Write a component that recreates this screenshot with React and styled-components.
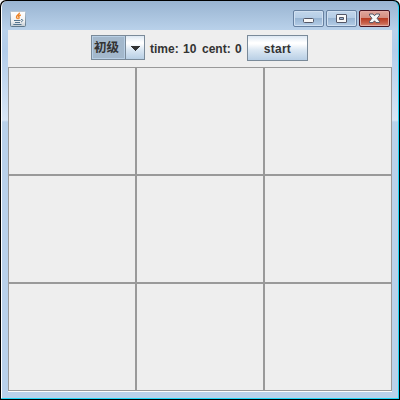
import React from 'react';
import styled, { createGlobalStyle } from 'styled-components';

const Global = createGlobalStyle`
  * { box-sizing: border-box; }
  html, body { margin: 0; background: #f4f4f4; overflow: hidden; }
`;

const Desktop = styled.div`
  width: 400px;
  height: 400px;
  padding: 1px;
  background: #000;
  border-radius: 6px 6px 0 0;
  font-family: "Liberation Sans", "Noto Sans CJK SC", sans-serif;
`;

const Frame = styled.div`
  display: flex;
  flex-direction: column;
  width: 398px;
  height: 398px;
  padding: 0 6px 6px;
  border: solid;
  border-width: 0 1px 1px 1px;
  border-color: #fff #20d5f5 #20d5f5 #fff;
  border-radius: 6px 6px 1px 1px;
  background: linear-gradient(#99b4d1 0, #b9d1ea 29px, #b3cdea 50px, #d8e6f5 119px, #b9d1ea 121px, #b9d1ea 100%);
`;

const TitleBar = styled.div`
  display: flex;
  justify-content: space-between;
  height: 29px;
  flex: none;
  padding: 9px 2px 0;
`;

const Controls = styled.div`
  display: flex;
  gap: 2px;
`;

const faces = {
  normal: 'linear-gradient(#c2d6eb 0, #b5cde6 45%, #98b5d3 50%, #b4cde7 100%)',
  close: 'linear-gradient(#e0a79d 0, #d58d80 45%, #b93c23 50%, #c8604b 80%, #d58b74 100%)',
};

const WindowButton = styled.button`
  display: flex;
  align-items: center;
  justify-content: center;
  width: 31px;
  height: 17px;
  padding: 0;
  border: 1px solid ${(p) => (p.$kind === 'close' ? '#481522' : '#6680a0')};
  border-radius: 2px;
  box-shadow: inset 0 0 0 1px ${(p) => (p.$kind === 'close' ? '#e4aaa3' : '#d0e0f1')};
  background: ${(p) => faces[p.$kind]};
`;

const JavaIcon = styled.svg`
  display: block;
  width: 16px;
  height: 16px;
  margin-top: 1px;
`;

const Content = styled.div`
  display: flex;
  flex-direction: column;
  flex: none;
  height: 362px;
  background: #eee;
  border-bottom: 1px solid #fafafa;
`;

const Toolbar = styled.div`
  display: flex;
  align-items: flex-start;
  height: 37px;
  flex: none;
  padding: 5px 0 0 83px;
`;

const metal = 'linear-gradient(#dde8f3 0, #fff 27%, #fff 33%, #dce8f3 58%, #b8cfe5 100%)';

const Combo = styled.div`
  display: flex;
  width: 54px;
  height: 25px;
  border: 1px solid #7a8a99;
  background: #a3b8cc;
`;

const Selected = styled.div`
  width: 33px;
  border: 1px solid #b8cfe5;
  padding-left: 1px;
  font: bold 12.5px/20px "Noto Sans CJK SC", sans-serif;
  color: #333;
  white-space: nowrap;
`;

const Arrow = styled.div`
  display: flex;
  align-items: center;
  justify-content: center;
  width: 19px;
  padding-top: 1px;
  border-left: 1px solid #7a8a99;
  background: ${metal};
`;

const Label = styled.span`
  width: ${(p) => p.$width}px;
  margin-left: 5px;
  font-size: 12px;
  font-weight: bold;
  line-height: 28px;
  letter-spacing: ${(p) => p.$spacing || 0}px;
  white-space: nowrap;
  color: #333;
`;

const StartButton = styled.button`
  width: 61px;
  height: 26px;
  margin-left: 5px;
  padding: 2px 0 0;
  border: 1px solid #7a8a99;
  border-radius: 0;
  background: ${metal};
  font: bold 12px/22px "Liberation Sans", sans-serif;
  letter-spacing: 0.25px;
  color: #333;
`;

const Board = styled.div`
  display: grid;
  grid-template: repeat(3, 108px) / repeat(3, 128px);
`;

const Cell = styled.div`
  border: 1px solid #999;
  background: #eee;
`;

export default function App() {
  return (
    <>
      <Global />
      <Desktop>
        <Frame>
          <TitleBar>
            <JavaIcon viewBox="0 0 16 16">
              <defs>
                <linearGradient id="tile" x1="0" y1="0" x2="0" y2="1">
                  <stop offset="0" stopColor="#fff" />
                  <stop offset="0.65" stopColor="#f0f1f2" />
                  <stop offset="1" stopColor="#c0c9d1" />
                </linearGradient>
                <linearGradient id="rim" x1="0" y1="0" x2="0" y2="1">
                  <stop offset="0" stopColor="#b9c6d2" />
                  <stop offset="1" stopColor="#5f778a" />
                </linearGradient>
              </defs>
              <rect x="0.5" y="0.5" width="15" height="15" rx="1" fill="url(#tile)" stroke="url(#rim)" />
              <path d="M9.4 1.6C9.8 3.5 6.2 4.2 6.5 6.2C6.6 7 7.4 7.3 7.5 8.1M10.8 4C8.4 4.7 8.3 5.5 9 6.2C9.4 6.8 9 7.4 8.4 7.9" fill="none" stroke="#ed8428" strokeWidth="1.4" />
              <path d="M4 9.5H10.5M11 8.6C13.5 8 13.3 10.4 11 10.9M5 11.5H10M3.3 13.5H11.5" fill="none" stroke="#55758f" strokeWidth="1" />
            </JavaIcon>
            <Controls>
              <WindowButton $kind="normal" aria-label="Minimize">
                <svg width="13" height="11" viewBox="0 0 13 11">
                  <rect x="1.5" y="5.5" width="10" height="4" rx="1" fill="#f8f8f8" stroke="#535666" />
                </svg>
              </WindowButton>
              <WindowButton $kind="normal" aria-label="Maximize">
                <svg width="13" height="11" viewBox="0 0 13 11">
                  <path d="M2 1.5H11Q11.5 1.5 11.5 2V9Q11.5 9.5 11 9.5H2Q1.5 9.5 1.5 9V2Q1.5 1.5 2 1.5Z M4.5 4.5V6.5H8.5V4.5Z" fill="#f8f8f8" fillRule="evenodd" stroke="#535666" />
                </svg>
              </WindowButton>
              <WindowButton $kind="close" aria-label="Close">
                <svg width="13" height="11" viewBox="0 0 13 11">
                  <path d="M1.5 1H5L6.5 2.8L8 1H11.5V2.2L9.1 5.3L11.5 8.4V9.6H8L6.5 7.8L5 9.6H1.5V8.4L3.9 5.3L1.5 2.2Z" fill="#f8f8f8" stroke="#535666" />
                </svg>
              </WindowButton>
            </Controls>
          </TitleBar>
          <Content>
            <Toolbar>
              <Combo>
                <Selected>初级</Selected>
                <Arrow>
                  <svg width="10" height="5" viewBox="0 0 10 5" shapeRendering="crispEdges">
                    <path d="M0 0H10L5 5Z" fill="#333" />
                  </svg>
                </Arrow>
              </Combo>
              <Label $width={28}>time:</Label>
              <Label $width={14} $spacing={0.2}>10</Label>
              <Label $width={28}>cent:</Label>
              <Label $width={7}>0</Label>
              <StartButton>start</StartButton>
            </Toolbar>
            <Board>
              {Array.from({ length: 9 }, (_, i) => <Cell key={i} />)}
            </Board>
          </Content>
        </Frame>
      </Desktop>
    </>
  );
}
